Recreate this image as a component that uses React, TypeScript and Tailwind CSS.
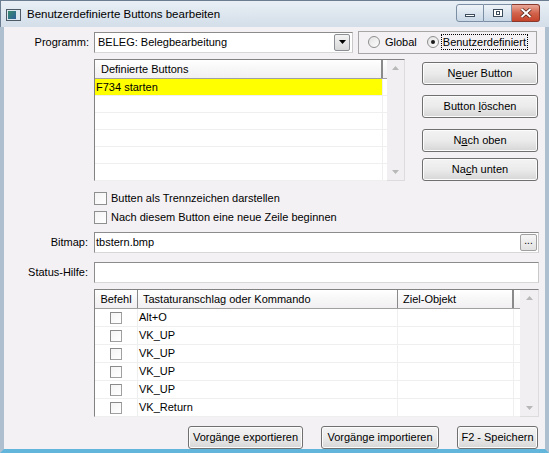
import React from 'react'

const font = "font-['Liberation_Sans',Arial,sans-serif]"

function WinButton({ children, className = '' }: { children: React.ReactNode; className?: string }) {
  return (
    <div
      className={`flex items-center justify-center rounded-[3px] border border-[#707070] bg-gradient-to-b from-[#f3f3f3] via-[#ebebeb] to-[#d6d6d6] text-[11px] text-black shadow-[inset_0_0_0_1px_#fcfcfc] ${className}`}
    >
      {children}
    </div>
  )
}

function ScrollV({ className = '' }: { className?: string }) {
  return (
    <div className={`flex w-[17px] flex-col items-center justify-between bg-[#f1eff1] py-[6px] ${className}`}>
      <svg width="7" height="4" viewBox="0 0 7 4"><path d="M0 4 L3.5 0 L7 4 Z" fill="#b8b8b8" /></svg>
      <svg width="7" height="4" viewBox="0 0 7 4"><path d="M0 0 L3.5 4 L7 0 Z" fill="#b8b8b8" /></svg>
    </div>
  )
}

function Check({ small = false }: { small?: boolean }) {
  return (
    <div
      className={`${small ? 'h-[12px] w-[12px] border-[#a0a0a0] border-t-[#8a8a8a] border-l-[#8a8a8a]' : 'h-[13px] w-[13px] border-[#8e8f8f]'} shrink-0 border bg-gradient-to-br from-[#f4f4f4] to-white`}
    />
  )
}

function Radio({ on = false }: { on?: boolean }) {
  return (
    <div className="flex h-[12px] w-[12px] shrink-0 items-center justify-center rounded-full border border-[#8e8f8f] bg-gradient-to-br from-[#e2e2e2] to-[#fdfdfd]">
      {on && <div className="h-[4px] w-[4px] rounded-full bg-[#1a1a1a]" />}
    </div>
  )
}

export default function App() {
  const listRows = ['F734 starten', '', '', '', '', '']
  const gridRows = ['Alt+O', 'VK_UP', 'VK_UP', 'VK_UP', 'VK_UP', 'VK_Return']

  return (
    <div className={`${font} flex h-[453px] w-[549px] flex-col overflow-hidden bg-[#cfdbe7] text-[11px] text-black`}>
      {/* Title bar */}
      <div className="flex h-[27px] shrink-0 items-start border-t border-l border-[#6b7d90] bg-gradient-to-b from-[#e9eff5] to-[#d3dee9] pl-[5px] pr-[9px]">
        <div className="mt-[8px] flex h-[12px] w-[15px] items-center border border-[#4c5a68] bg-[#dfe7ee]">
          <div className="ml-[1px] h-[8px] w-[8px] bg-gradient-to-br from-[#3a8a6a] to-[#2f5f9a]" />
        </div>
        <div className="ml-[6px] mt-[5px] text-[11.5px] text-black">Benutzerdefinierte Buttons bearbeiten</div>
        <div className="ml-auto mt-[3px] flex">
          <div className="flex h-[18px] w-[28px] items-center justify-center rounded-l-[3px] border border-[#7b8ea3] bg-gradient-to-b from-[#eef3f8] to-[#c9d7e6]">
            <div className="mt-[5px] h-[3px] w-[10px] border border-[#3d4c5c] bg-white" />
          </div>
          <div className="flex h-[18px] w-[28px] items-center justify-center border border-l-0 border-[#7b8ea3] bg-gradient-to-b from-[#eef3f8] to-[#c9d7e6]">
            <div className="h-[8px] w-[10px] border border-[#3d4c5c] bg-white">
              <div className="mx-auto mt-[1px] h-[4px] w-[4px] border border-[#3d4c5c]" />
            </div>
          </div>
          <div className="flex h-[18px] w-[28px] items-center justify-center rounded-r-[3px] border border-l-0 border-[#8a3a2c] bg-gradient-to-b from-[#e9a99a] via-[#d2634c] to-[#c6442b]">
            <svg width="12" height="10" viewBox="0 0 12 10">
              <path d="M1.5 1 L10.5 9 M10.5 1 L1.5 9" stroke="#4a1a10" strokeWidth="3.4" />
              <path d="M1.5 1 L10.5 9 M10.5 1 L1.5 9" stroke="#ffffff" strokeWidth="2" />
            </svg>
          </div>
        </div>
      </div>

      {/* Body */}
      <div className="flex flex-1 flex-col border-l-[4px] border-r-[4px] border-b-[4px] border-l-[#aebfd0] border-r-[#aebfd0] border-b-[#62b6dc] bg-[#f4f1f4] pr-[3px]">
        {/* Programm row */}
        <div className="mt-[4px] flex h-[22px] items-center">
          <div className="w-[86px] pr-[1px] text-right">Programm:</div>
          <div className="ml-[4px] flex h-[21px] w-[259px] items-center border border-[#8c8c8c] border-r-[#c9c9c9] border-b-[#d8d8d8] bg-white pl-[3px] pr-[2px]">
            <span className="flex-1">BELEG: Belegbearbeitung</span>
            <div className="flex h-[17px] w-[16px] items-center justify-center rounded-[2px] border border-[#8c8f94] bg-gradient-to-b from-[#f4f4f4] to-[#d8d8d8]">
              <svg width="7" height="4" viewBox="0 0 7 4"><path d="M0 0 L7 0 L3.5 4 Z" fill="#000" /></svg>
            </div>
          </div>
          <div className="ml-[5px] flex h-[23px] w-[179px] items-center border border-[#a6a6a6] pl-[9px]">
            <Radio />
            <span className="ml-[5px]">Global</span>
            <div className="ml-[10px]"><Radio on /></div>
            <span className="ml-[2px] whitespace-nowrap border border-dotted border-black px-[1px] leading-[14px]">Benutzerdefiniert</span>
          </div>
        </div>

        {/* List + buttons */}
        <div className="mt-[6px] flex">
          <div className="ml-[90px] flex h-[122px] w-[311px] border border-[#828282] border-r-[#dcdcdc] border-b-[#dcdcdc] bg-white">
            <div className="flex flex-1 flex-col">
              <div className="flex h-[19px] shrink-0 border-b border-[#a0a0a0] bg-gradient-to-b from-white to-[#f1eff1]">
                <div className="w-[288px] border-r-2 border-[#8a8a8a] pl-[6px] leading-[18px]">Definierte Buttons</div>
              </div>
              {listRows.map((r, i) => (
                <div key={i} className="flex h-[17px] shrink-0 border-b border-[#efefef]">
                  <div className={`w-[288px] border-r border-[#efefef] pl-[1px] leading-[17px] ${r ? 'bg-[#ffff00]' : ''}`}>{r}</div>
                </div>
              ))}
            </div>
            <ScrollV />
          </div>
          <div className="ml-[17px] mt-[3px] flex w-[116px] flex-col">
            <WinButton className="h-[23px]"><span>N<u>e</u>uer Button</span></WinButton>
            <WinButton className="mt-[10px] h-[23px]"><span>Button <u>l</u>öschen</span></WinButton>
            <WinButton className="mt-[11px] h-[23px]"><span>N<u>a</u>ch oben</span></WinButton>
            <WinButton className="mt-[6px] h-[23px]"><span>Na<u>c</u>h unten</span></WinButton>
          </div>
        </div>

        {/* Checkboxes */}
        <div className="mt-[8px] ml-[90px] flex h-[19px] items-center">
          <Check />
          <span className="ml-[4px]">Butten als Trennzeichen darstellen</span>
        </div>
        <div className="ml-[90px] flex h-[19px] items-center">
          <Check />
          <span className="ml-[4px]">Nach diesem Button eine neue Zeile beginnen</span>
        </div>

        {/* Bitmap */}
        <div className="mt-[5px] flex items-center">
          <div className="w-[84px] text-right">Bitmap:</div>
          <div className="ml-[6px] flex h-[21px] w-[445px] items-center border border-[#8c8c8c] border-r-[#c9c9c9] border-b-[#d8d8d8] bg-white pr-[1px]">
            <span className="flex-1 pl-[1px]">tbstern.bmp</span>
            <div className="flex h-[17px] w-[17px] items-start justify-center rounded-[2px] border border-[#a0a0a0] bg-gradient-to-b from-[#f6f6f6] to-[#e2e2e2] text-[10px] leading-[12px]">...</div>
          </div>
        </div>

        {/* Status-Hilfe */}
        <div className="mt-[9px] flex items-center">
          <div className="w-[84px] text-right">Status-Hilfe:</div>
          <div className="ml-[6px] h-[21px] w-[445px] border border-[#8c8c8c] border-r-[#c9c9c9] border-b-[#d8d8d8] bg-white" />
        </div>

        {/* Grid */}
        <div className="ml-[90px] mt-[6px] flex h-[128px] w-[445px] border border-[#828282] border-r-[#dcdcdc] border-b-[#dcdcdc] bg-white">
          <div className="flex flex-1 flex-col">
            <div className="flex h-[19px] shrink-0 border-b border-[#a0a0a0] bg-gradient-to-b from-white to-[#f1eff1] leading-[18px]">
              <div className="w-[43px] border-r border-[#8a8a8a] text-center">Befehl</div>
              <div className="w-[260px] border-r border-[#8a8a8a] pl-[5px]">Tastaturanschlag oder Kommando</div>
              <div className="w-[116px] border-r-2 border-[#8a8a8a] pl-[5px]">Ziel-Objekt</div>
            </div>
            {gridRows.map((r, i) => (
              <div key={i} className="flex h-[18px] shrink-0 border-b border-[#efefef] leading-[17px]">
                <div className="flex w-[43px] items-center justify-center border-r border-[#efefef]"><Check small /></div>
                <div className="w-[260px] border-r border-[#efefef] pl-[1px]">{r}</div>
                <div className="w-[116px] border-r border-[#efefef]" />
              </div>
            ))}
          </div>
          <ScrollV className="w-[18px]" />
        </div>

        {/* Bottom buttons */}
        <div className="mt-[9px] flex">
          <WinButton className="ml-[184px] h-[23px] w-[115px]">Vorgänge exportieren</WinButton>
          <WinButton className="ml-[18px] h-[23px] w-[118px]">Vorgänge importieren</WinButton>
          <WinButton className="ml-[18px] h-[23px] w-[81px]">F2 - Speichern</WinButton>
        </div>
      </div>
    </div>
  )
}
